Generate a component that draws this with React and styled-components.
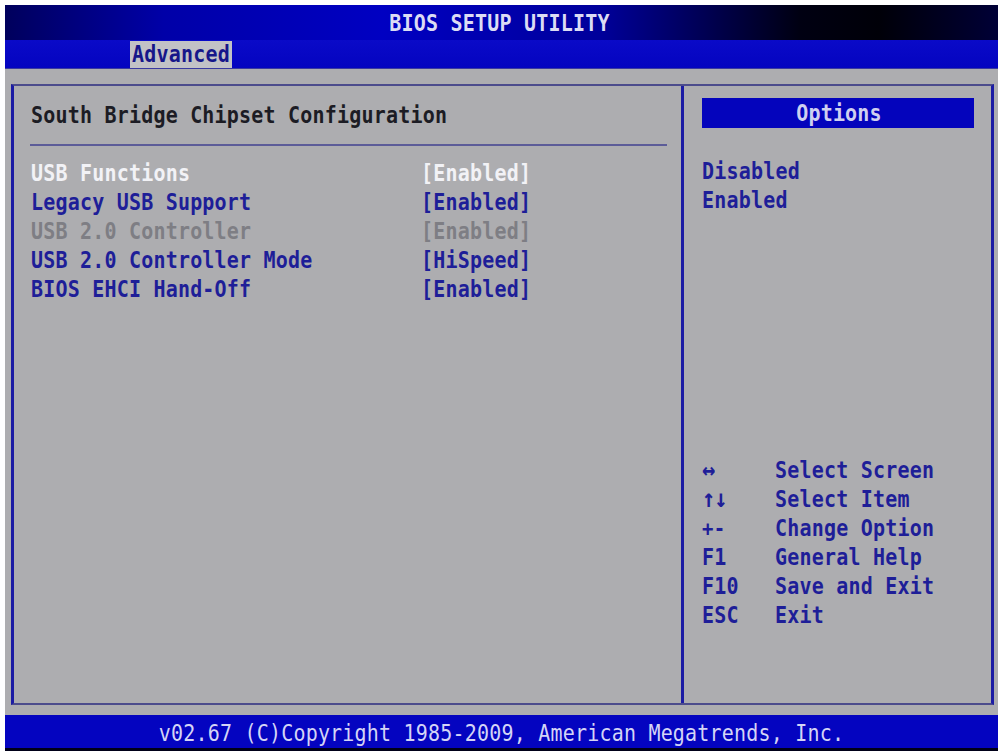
import React from "react";
import styled, { createGlobalStyle, css } from "styled-components";

const FONT = `"DejaVu Sans Mono", "Liberation Mono", monospace`;

const GlobalStyle = createGlobalStyle`
  html, body {
    margin: 0;
    padding: 0;
    background: #ffffff;
  }
  body {
    font-family: ${FONT};
  }
  * { box-sizing: border-box; }
`;

const tall = css`
  transform: scaleY(1.15);
`;

const Screen = styled.div`
  margin: 5px 3px 0 5px;
  width: 993px;
  height: 746px;
  display: flex;
  flex-direction: column;
  background: #adadb0;
  font-family: ${FONT};
  font-weight: bold;
  font-size: 20px;
  letter-spacing: 0.2px;
`;

const TitleBar = styled.header`
  height: 35px;
  display: flex;
  align-items: center;
  justify-content: center;
  background: linear-gradient(
    90deg,
    #00005c 0%,
    #0000a8 16%,
    #0000c2 38%,
    #00009a 60%,
    #000012 80%,
    #000008 88%,
    #000036 100%
  );
  color: #dcdcf4;
  padding-right: 4px;
`;

const TitleText = styled.span`
  display: inline-block;
  ${tall}
`;

const MenuBar = styled.nav`
  height: 29px;
  display: flex;
  align-items: flex-end;
  padding-left: 125px;
  background: linear-gradient(180deg, #0a0ac8 0%, #0404c0 100%);
  border-bottom: 1px solid #3a3aa0;
`;

const Tab = styled.div`
  height: 27px;
  line-height: 27px;
  padding: 0 2px;
  background: ${(p) => (p.$active ? "#c2c2c6" : "transparent")};
  color: ${(p) => (p.$active ? "#16168a" : "#dcdcf4")};
  span {
    display: inline-block;
    ${tall}
  }
`;

const Body = styled.main`
  flex: 1;
  display: flex;
  padding: 15px 4px 10px 6px;
`;

const Frame = styled.div`
  flex: 1;
  display: flex;
  border-left: 3px solid #1c1ca4;
  border-right: 3px solid #1c1ca4;
  border-top: 2px solid #4c4c8c;
  border-bottom: 2px solid #4c4c8c;
`;

const MainPanel = styled.section`
  width: 670px;
  padding: 17px 14px 0 17px;
  border-right: 3px solid #1c1ca4;
`;

const PanelTitle = styled.h1`
  margin: 0;
  font: inherit;
  line-height: 24px;
  color: #1c1c24;
  ${tall}
`;

const Rule = styled.hr`
  margin: 17px 0 0 -1px;
  height: 2px;
  border: 0;
  background: #5c5c98;
`;

const SettingsList = styled.div`
  margin-top: 12px;
  display: grid;
  grid-template-columns: 390px auto;
  grid-auto-rows: 29px;
  align-items: center;
`;

const tone = {
  selected: "#f2f2f6",
  normal: "#1e1e98",
  disabled: "#7e7e84",
};

const Cell = styled.div`
  color: ${(p) => tone[p.$state]};
  white-space: pre;
  ${tall}
`;

const SidePanel = styled.aside`
  flex: 1;
  display: flex;
  flex-direction: column;
  padding: 12px 17px 74px 18px;
`;

const OptionsHeader = styled.div`
  height: 30px;
  line-height: 30px;
  text-align: center;
  background: #0404bc;
  color: #cfcff0;
  padding-left: 2px;
  span {
    display: inline-block;
    ${tall}
  }
`;

const OptionList = styled.div`
  margin-top: 29px;
  display: flex;
  flex-direction: column;
`;

const OptionItem = styled.div`
  height: 29px;
  line-height: 29px;
  color: #1e1e98;
  ${tall}
`;

const HelpGrid = styled.div`
  margin-top: auto;
  display: grid;
  grid-template-columns: 73px auto;
  grid-auto-rows: 29px;
  align-items: center;
  color: #1e1e98;
`;

const glyphSize = { arrow: "22px", sign: "19px" };

const HelpKey = styled.div`
  ${tall}
  font-size: ${(p) => (p.$glyph ? glyphSize[p.$glyph] : "inherit")};
  letter-spacing: ${(p) => (p.$glyph === "arrow" ? "-1px" : "inherit")};
`;

const HelpText = styled.div`
  ${tall}
`;

const Footer = styled.footer`
  height: 36px;
  display: flex;
  align-items: center;
  justify-content: center;
  background: #0404c0;
  border-bottom: 3px solid #000018;
  color: #d4d4f6;
  font-weight: normal;
  padding-top: 2px;
  span {
    display: inline-block;
    ${tall}
  }
`;

const settings = [
  { label: "USB Functions", value: "[Enabled]", state: "selected" },
  { label: "Legacy USB Support", value: "[Enabled]", state: "normal" },
  { label: "USB 2.0 Controller", value: "[Enabled]", state: "disabled" },
  { label: "USB 2.0 Controller Mode", value: "[HiSpeed]", state: "normal" },
  { label: "BIOS EHCI Hand-Off", value: "[Enabled]", state: "normal" },
];

const help = [
  { key: "↔", glyph: "arrow", text: "Select Screen" },
  { key: "↑↓", glyph: "arrow", text: "Select Item" },
  { key: "+-", glyph: "sign", text: "Change Option" },
  { key: "F1", text: "General Help" },
  { key: "F10", text: "Save and Exit" },
  { key: "ESC", text: "Exit" },
];

export default function App() {
  return (
    <>
      <GlobalStyle />
      <Screen>
        <TitleBar>
          <TitleText>BIOS SETUP UTILITY</TitleText>
        </TitleBar>
        <MenuBar>
          <Tab $active>
            <span>Advanced</span>
          </Tab>
        </MenuBar>
        <Body>
          <Frame>
            <MainPanel>
              <PanelTitle>South Bridge Chipset Configuration</PanelTitle>
              <Rule />
              <SettingsList>
                {settings.map((s) => (
                  <React.Fragment key={s.label}>
                    <Cell $state={s.state}>{s.label}</Cell>
                    <Cell $state={s.state}>{s.value}</Cell>
                  </React.Fragment>
                ))}
              </SettingsList>
            </MainPanel>
            <SidePanel>
              <OptionsHeader>
                <span>Options</span>
              </OptionsHeader>
              <OptionList>
                <OptionItem>Disabled</OptionItem>
                <OptionItem>Enabled</OptionItem>
              </OptionList>
              <HelpGrid>
                {help.map((h) => (
                  <React.Fragment key={h.key}>
                    <HelpKey $glyph={h.glyph}>{h.key}</HelpKey>
                    <HelpText>{h.text}</HelpText>
                  </React.Fragment>
                ))}
              </HelpGrid>
            </SidePanel>
          </Frame>
        </Body>
        <Footer>
          <span>v02.67 (C)Copyright 1985-2009, American Megatrends, Inc.</span>
        </Footer>
      </Screen>
    </>
  );
}
